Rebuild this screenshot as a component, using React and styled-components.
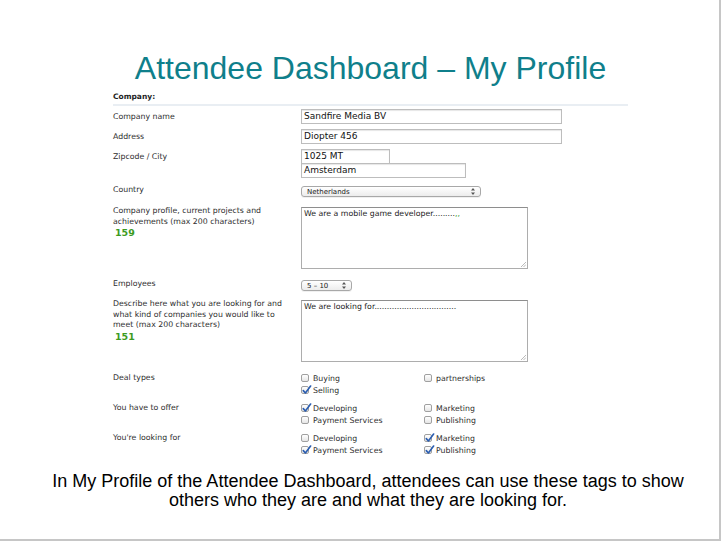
import React from 'react'
import styled, { createGlobalStyle } from 'styled-components'

const GlobalStyle = createGlobalStyle`
  html, body { margin: 0; padding: 0; background: #fff; }
  body { font-family: "Liberation Sans", Arial, sans-serif; }
`

const Slide = styled.div`
  width: 721px;
  height: 541px;
  box-sizing: border-box;
  border-right: 2px solid #c6c6c6;
  border-bottom: 2px solid #c6c6c6;
  padding-top: 52px;
  display: flex;
  flex-direction: column;
`

const Title = styled.h1`
  margin: 0;
  padding-left: 22px;
  text-align: center;
  font: 400 32px/32px "Liberation Sans", Arial, sans-serif;
  color: #0f7f8b;
`

const Form = styled.div`
  margin: 8px 0 0 113px;
  width: 515px;
  font-family: "DejaVu Sans", Verdana, sans-serif;
  color: #333;
`

const SectionHead = styled.div`
  font-size: 7.5px;
  font-weight: bold;
  line-height: 10px;
  color: #1e1e1e;
  padding-bottom: 2px;
  border-bottom: 2px solid #e9eef3;
  margin-bottom: 3px;
`

const Row = styled.div`
  display: grid;
  grid-template-columns: 188px 1fr;
  margin-top: ${p => p.$gap || 0}px;
`

const Label = styled.div`
  font-size: 7.8px;
  line-height: 10.5px;
  color: #2e2e2e;
  margin-top: ${p => p.$shift || 0}px;
`

const Count = styled.div`
  font-size: 9.5px;
  font-weight: bold;
  line-height: 11px;
  color: #3d9b1f;
  padding-left: 2px;
`

const Stack = styled.div`
  display: flex;
  flex-direction: column;
  align-items: flex-start;
`

const TextInput = styled.div`
  width: ${p => p.$w}px;
  height: 15px;
  box-sizing: border-box;
  border: 1px solid #bdbdbd;
  box-shadow: inset 0 1px 1px rgba(0, 0, 0, 0.1);
  font-size: 9px;
  line-height: 13px;
  padding-left: 2px;
  color: #111;
  background: #fff;
  & + & { margin-top: -1px; }
`

const Select = styled.div`
  width: ${p => p.$w}px;
  height: 11px;
  box-sizing: border-box;
  border: 1px solid #a8a8a8;
  border-radius: 3px;
  background: linear-gradient(#ffffff, #ececec);
  box-shadow: 0 1px 0 rgba(0, 0, 0, 0.06);
  display: flex;
  align-items: center;
  justify-content: space-between;
  padding: 0 5px 0 5px;
  font-size: 7px;
  color: #222;
`

const TextArea = styled.div`
  position: relative;
  width: 227px;
  height: 62px;
  box-sizing: border-box;
  border: 1px solid #adadad;
  border-top-color: #8e8e8e;
  padding: 1px 2px;
  font-size: 7.8px;
  line-height: 10px;
  color: #222;
`

const Grip = styled.svg`
  position: absolute;
  right: 1px;
  bottom: 1px;
`

const Green = styled.span`
  color: #4aa53a;
`

const Options = styled.div`
  display: grid;
  grid-template-columns: 123px auto;
  grid-auto-rows: 12px;
`

const Option = styled.div`
  display: flex;
  align-items: center;
  gap: 4px;
  font-size: 7.8px;
  color: #2e2e2e;
`

const Box = styled.span`
  position: relative;
  width: 8px;
  height: 8px;
  box-sizing: border-box;
  border: 1px solid #a0a0a0;
  border-radius: 2px;
  background: linear-gradient(#ffffff, #e6e6e6);
  flex: none;
`

const Check = styled.svg`
  position: absolute;
  left: 0px;
  top: -2px;
`

const Caption = styled.p`
  margin: 16px 0 0;
  padding-left: 17px;
  text-align: center;
  font: 400 18px/19px "Liberation Sans", Arial, sans-serif;
  color: #000;
`

const Arrows = () => (
  <svg width="4" height="7" viewBox="0 0 4 7">
    <path d="M2 0 L4 2.5 L0 2.5 Z M2 7 L4 4.5 L0 4.5 Z" fill="#555" />
  </svg>
)

const CheckItem = ({ label, checked }) => (
  <Option>
    <Box>
      {checked && (
        <Check width="10" height="10" viewBox="0 0 10 10">
          <path d="M1.3 5.6 L3.4 8 L8.6 1" fill="none" stroke="#2a5db0" strokeWidth="1.6" strokeLinecap="round" strokeLinejoin="round" />
        </Check>
      )}
    </Box>
    {label}
  </Option>
)

const dealTypes = [
  { label: 'Buying' }, { label: 'partnerships' },
  { label: 'Selling', checked: true }, null,
]
const offer = [
  { label: 'Developing', checked: true }, { label: 'Marketing' },
  { label: 'Payment Services' }, { label: 'Publishing' },
]
const looking = [
  { label: 'Developing' }, { label: 'Marketing', checked: true },
  { label: 'Payment Services', checked: true }, { label: 'Publishing', checked: true },
]

const CheckGroup = ({ items }) => (
  <Options>
    {items.map((it, i) => it ? <CheckItem key={i} {...it} /> : <span key={i} />)}
  </Options>
)

const Area = ({ children }) => (
  <TextArea>
    {children}
    <Grip width="6" height="6" viewBox="0 0 6 6">
      <path d="M6 1 L1 6 M6 3.5 L3.5 6" stroke="#aaa" strokeWidth="0.8" />
    </Grip>
  </TextArea>
)

export default function App() {
  return (
    <>
      <GlobalStyle />
      <Slide>
        <Title>Attendee Dashboard – My Profile</Title>
        <Form>
          <SectionHead>Company:</SectionHead>
          <Row>
            <Label $shift={3}>Company name</Label>
            <TextInput $w={261}>Sandfire Media BV</TextInput>
          </Row>
          <Row $gap={5}>
            <Label $shift={3}>Address</Label>
            <TextInput $w={261}>Diopter 456</TextInput>
          </Row>
          <Row $gap={5}>
            <Label $shift={3}>Zipcode / City</Label>
            <Stack>
              <TextInput $w={89}>1025 MT</TextInput>
              <TextInput $w={165}>Amsterdam</TextInput>
            </Stack>
          </Row>
          <Row $gap={8}>
            <Label $shift={-1}>Country</Label>
            <Select $w={180}>Netherlands<Arrows /></Select>
          </Row>
          <Row $gap={10}>
            <div>
              <Label $shift={-1}>Company profile, current projects and<br />achievements (max 200 characters)</Label>
              <Count>159</Count>
            </div>
            <Area>We are a mobile game developer.........<Green>,,</Green></Area>
          </Row>
          <Row $gap={11}>
            <Label $shift={-1}>Employees</Label>
            <Select $w={51}>5 – 10<Arrows /></Select>
          </Row>
          <Row $gap={9}>
            <div>
              <Label $shift={-1}>Describe here what you are looking for and<br />what kind of companies you would like to<br />meet (max 200 characters)</Label>
              <Count>151</Count>
            </div>
            <Area>We are looking for.................................</Area>
          </Row>
          <Row $gap={10}>
            <Label $shift={1}>Deal types</Label>
            <CheckGroup items={dealTypes} />
          </Row>
          <Row $gap={6}>
            <Label $shift={1}>You have to offer</Label>
            <CheckGroup items={offer} />
          </Row>
          <Row $gap={6}>
            <Label $shift={1}>You're looking for</Label>
            <CheckGroup items={looking} />
          </Row>
        </Form>
        <Caption>
          In My Profile of the Attendee Dashboard, attendees can use these tags to show<br />
          others who they are and what they are looking for.
        </Caption>
      </Slide>
    </>
  )
}
